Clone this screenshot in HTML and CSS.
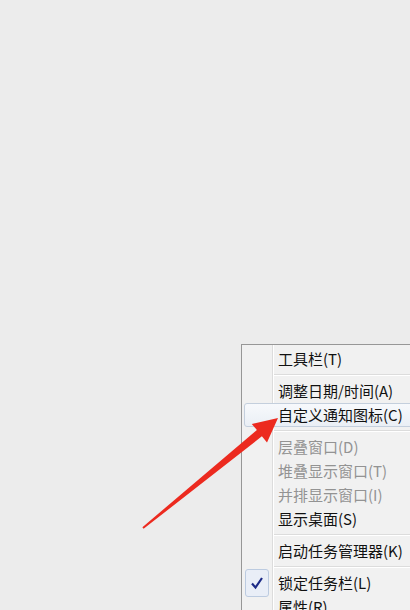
FILE: index.html
```html
<!DOCTYPE html>
<html lang="zh-CN">
<head>
<meta charset="utf-8">
<link rel="stylesheet" href="styles.css">
</head>
<body>
<div class="stage">
  <div class="menu">
    <div class="item">工具栏(T)</div>
    <div class="sep"></div>
    <div class="item">调整日期/时间(A)</div>
    <div class="item hover">自定义通知图标(C)</div>
    <div class="sep"></div>
    <div class="item disabled">层叠窗口(D)</div>
    <div class="item disabled">堆叠显示窗口(T)</div>
    <div class="item disabled">并排显示窗口(I)</div>
    <div class="item">显示桌面(S)</div>
    <div class="sep"></div>
    <div class="item">启动任务管理器(K)</div>
    <div class="sep"></div>
    <div class="item checked"><span class="check"><svg width="14" height="14" viewBox="0 0 14 14"><path d="M2 7.5 L5.5 11.5 L12 2" fill="none" stroke="#1c2a86" stroke-width="2.2" stroke-linejoin="miter"/></svg></span>锁定任务栏(L)</div>
    <div class="item">属性(R)</div>
  </div>
  <svg class="arrow" width="410" height="610" viewBox="0 0 410 610">
    <polygon fill="#ec2a1f" points="278,418 267,442.5 261.9,436.3 143.6,528.8 142.4,527.2 256.9,430.1 251.8,423.9"/>
  </svg>
</div>
</body>
</html>
```
FILE: styles.css
```css
html, body {
  margin: 0;
  padding: 0;
  width: 410px;
  height: 610px;
  overflow: hidden;
  background: #ececec;
}
.stage {
  position: relative;
  width: 410px;
  height: 610px;
  padding: 344px 0 0 241px;
  box-sizing: border-box;
  overflow: hidden;
}
.menu {
  width: 200px;
  border: 1px solid #979797;
  border-right: none;
  padding: 2px;
  background-color: #f1f1f1;
  background-image: linear-gradient(to right, transparent 30px, #dcdcdc 30px, #dcdcdc 31px, #ffffff 31px, #ffffff 32px, transparent 32px);
  font-family: "Noto Sans CJK SC", "Noto Sans", sans-serif;
  font-size: 15px;
  color: #111;
}
.item {
  height: 24px;
  line-height: 24px;
  padding-left: 34px;
  box-sizing: border-box;
  white-space: nowrap;
  display: flex;
  align-items: center;
}
.item.disabled {
  color: #939393;
}
.item.hover {
  border: 1px solid #c4cfdd;
  border-radius: 3px;
  padding-left: 33px;
  background: linear-gradient(#f7f9fc, #eaeff5);
}
.item.checked {
  padding-left: 0;
}
.check {
  width: 24px;
  height: 28px;
  margin: 0 9px 0 1px;
  flex: none;
  box-sizing: border-box;
  border: 1px solid #bccbe0;
  border-radius: 3px;
  background: #e9eef7;
  display: flex;
  align-items: center;
  justify-content: center;
}
.sep {
  height: 8px;
  margin-left: 30px;
  background: linear-gradient(to bottom, transparent 3px, #dcdcdc 3px, #dcdcdc 4px, #ffffff 4px, #ffffff 5px, transparent 5px);
}
.arrow {
  position: absolute;
  left: 0;
  top: 0;
}
```
